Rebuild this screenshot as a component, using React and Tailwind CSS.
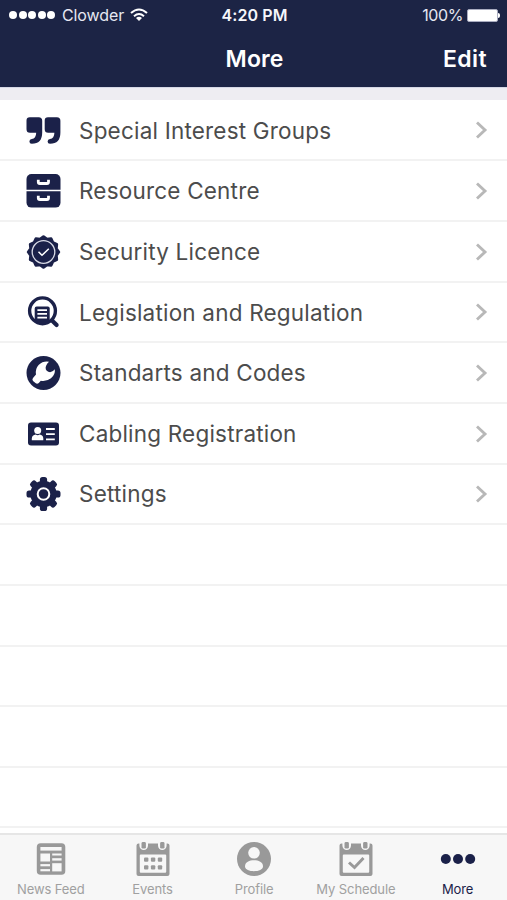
import React from "react";

const NAVY = "#1b2149";
const GREY = "#999999";

function Quotes() {
  const d = "M4.8 5.3H13.7Q17.2 5.3 17.2 8.8V20.5Q17.2 31.8 6.8 31.8Q4.4 31.8 4.4 29.5Q4.4 27.2 6.8 27Q11 26.6 11.2 20.7H5Q1.5 20.7 1.5 17.2V8.6Q1.5 5.3 4.8 5.3Z";
  return (
    <g fill={NAVY}>
      <path d={d} />
      <path d={d} transform="translate(18.2 0)" />
    </g>
  );
}

function Cabinet() {
  const handle = "M13.3 8V10.2Q13.3 11.7 14.8 11.7H22Q23.5 11.7 23.5 10.2V8";
  return (
    <g>
      <rect x="1.5" y="1" width="34" height="33.6" rx="5" fill={NAVY} />
      <path d="M1 17.5H36" stroke="#fff" strokeWidth="1.5" />
      <g fill="none" stroke="#fff" strokeWidth="2.8">
        <path d={handle} transform="translate(0 -1.2)" />
        <path d={handle} transform="translate(0 14.8)" />
      </g>
    </g>
  );
}

function toothPath(cx, cy, outer, inner, count) {
  const pts = [];
  for (let i = 0; i < count * 2; i++) {
    const a = (Math.PI * i) / count - Math.PI / 2;
    const r = i % 2 ? inner : outer;
    pts.push(`${(cx + r * Math.cos(a)).toFixed(2)} ${(cy + r * Math.sin(a)).toFixed(2)}`);
  }
  return `M${pts.join("L")}Z`;
}

function Seal() {
  return (
    <g>
      <path d={toothPath(18.5, 18, 15.2, 13.2, 12)} fill={NAVY} stroke={NAVY} strokeWidth="3" strokeLinejoin="round" />
      <circle cx="18.5" cy="18" r="11.3" fill="none" stroke="#d9dbe6" strokeWidth="1.3" />
      <path d="M13.5 17.8L17 21.3L23.8 14.7" fill="none" stroke="#fff" strokeWidth="1.5" />
    </g>
  );
}

function SearchDocument() {
  return (
    <g>
      <circle cx="17.5" cy="16.8" r="12.9" fill="none" stroke={NAVY} strokeWidth="3.4" />
      <path d="M9.7 14.5Q9.7 12.5 11.7 12.5H22.8Q24.7 12.5 24.7 14.5V29H13.8L9.7 26Z" fill={NAVY} />
      <path d="M12.4 16.2H22M12.4 19.9H22M12.4 23.6H22" stroke="#fff" strokeWidth="1.7" />
      <path d="M27 26.5L31.6 31.1" stroke={NAVY} strokeWidth="4.2" strokeLinecap="round" />
    </g>
  );
}

function WrenchBadge() {
  return (
    <g>
      <circle cx="18.5" cy="18" r="17" fill={NAVY} />
      <path
        d="M24 6.8Q18 5.8 13.6 10Q10 14 11 19.5L8 23Q6.8 24.5 8 26L10.8 28.3Q12.3 29.3 13.8 27.9L15.8 25.8Q21.5 26.8 26 23.3Q30.5 19.3 29.8 14.2Q26.8 18.2 23.3 16.8Q19.6 14.9 21 11Q21.8 8.6 24 6.8Z"
        fill="#fff"
      />
    </g>
  );
}

function IdCard() {
  return (
    <g>
      <rect x="3" y="6.5" width="31" height="23" rx="3" fill={NAVY} />
      <circle cx="12.7" cy="14.5" r="3.5" fill="#fff" />
      <path d="M6.8 24.3V22.5Q7.1 19 10.7 18.6Q12.7 19.8 14.7 18.6Q18.1 19 18.3 22.5V24.3Z" fill="#fff" />
      <path d="M21 13H29.8M21 18.2H29.8M21 23.4H29.8" stroke="#fff" strokeWidth="1.8" />
    </g>
  );
}

function Gear() {
  return (
    <g>
      <g fill={NAVY}>
        <circle cx="18.5" cy="18" r="13.2" />
        {[0, 45, 90, 135].map((a) => (
          <rect key={a} x="14.9" y="1" width="7.2" height="34" rx="2.6" transform={`rotate(${a} 18.5 18)`} />
        ))}
      </g>
      <circle cx="18.5" cy="18" r="5.8" fill="none" stroke="#fff" strokeWidth="2" />
    </g>
  );
}

function Calendar({ children }) {
  return (
    <g>
      <path
        d="M3.6 2.5H32.4Q34.5 2.5 34.5 4.6V33Q34.5 35 32.4 35H3.6Q1.5 35 1.5 33V4.6Q1.5 2.5 3.6 2.5ZM4.8 14.5V30.8Q4.8 31.8 5.8 31.8H30.2Q31.2 31.8 31.2 30.8V14.5Q31.2 13.5 30.2 13.5H5.8Q4.8 13.5 4.8 14.5Z"
        fill={GREY}
        fillRule="evenodd"
      />
      <g stroke="#f7f7f7" strokeWidth="8.6" strokeLinecap="round">
        <path d="M8.7 0V4.6M27.3 0V4.6" />
      </g>
      <g fill={GREY}>
        <rect x="6.5" y="1" width="4.4" height="6.6" rx="1.4" />
        <rect x="25.1" y="1" width="4.4" height="6.6" rx="1.4" />
      </g>
      {children}
    </g>
  );
}

function NewsFeed() {
  return (
    <g>
      <rect x="3.8" y="2.3" width="28.5" height="31.5" rx="3.8" fill={GREY} />
      <g fill="#f7f7f7">
        <rect x="7.4" y="6" width="21.2" height="3.6" />
        <rect x="7.4" y="12.5" width="9.6" height="8" />
        <rect x="19.2" y="12.5" width="9.4" height="2" />
        <rect x="19.2" y="17.2" width="9.4" height="2.4" />
        <rect x="19.2" y="22.2" width="9.4" height="8.2" />
        <rect x="7.4" y="23.1" width="9.6" height="2.2" />
        <rect x="7.4" y="28.1" width="9.6" height="2.2" />
      </g>
    </g>
  );
}

function Events() {
  return (
    <Calendar>
      <g fill={GREY}>
        {[16.4, 24.2].map((y) => [9, 15.9, 22.8].map((x) => <rect key={`${x}-${y}`} x={x} y={y} width="4.4" height="4.4" rx="1.1" />))}
      </g>
    </Calendar>
  );
}

function Profile() {
  return (
    <g>
      <circle cx="18" cy="18" r="17" fill={GREY} />
      <circle cx="18" cy="11.8" r="5.8" fill="#f7f7f7" />
      <path d="M9 25.2C9 17.4 27 17.4 27 25.2C27 31.8 9 31.8 9 25.2Z" fill="#f7f7f7" />
    </g>
  );
}

function Schedule() {
  return (
    <Calendar>
      <path d="M11 21.5L16.5 26.5L25.5 17" fill="none" stroke={GREY} strokeWidth="3" />
    </Calendar>
  );
}

function MoreDots() {
  return (
    <g fill={NAVY}>
      <circle cx="5.8" cy="18" r="5" />
      <circle cx="18" cy="18" r="5" />
      <circle cx="30.2" cy="18" r="5" />
    </g>
  );
}

const rows = [
  { label: "Special Interest Groups", Icon: Quotes },
  { label: "Resource Centre", Icon: Cabinet },
  { label: "Security Licence", Icon: Seal },
  { label: "Legislation and Regulation", Icon: SearchDocument },
  { label: "Standarts and Codes", Icon: WrenchBadge },
  { label: "Cabling Registration", Icon: IdCard },
  { label: "Settings", Icon: Gear },
];

const tabs = [
  { label: "News Feed", Icon: NewsFeed },
  { label: "Events", Icon: Events },
  { label: "Profile", Icon: Profile },
  { label: "My Schedule", Icon: Schedule },
  { label: "More", Icon: MoreDots, active: true },
];

function StatusBar() {
  return (
    <div className="grid h-[30px] grid-cols-3 items-center pl-[9px] pr-[7px] text-[16px] text-[#e6e8f2]">
      <div className="flex items-center">
        <div className="flex gap-[1.5px]">
          {[0, 1, 2, 3, 4].map((i) => (
            <span key={i} className="size-[8px] rounded-full bg-white" />
          ))}
        </div>
        <span className="ml-[7px] tracking-[-0.1px]">Clowder</span>
        <svg className="ml-[6px] h-[14px] w-[18px]" viewBox="0 0 18 14" fill="none" stroke="#fff" strokeWidth="2">
          <path d="M1 5.1Q9 -2.2 17 5.1M4 8.2Q9 3.8 14 8.2" />
          <path d="M9 12.9L6 9.9Q9 7.5 12 9.9Z" fill="#fff" stroke="none" />
        </svg>
      </div>
      <div className="text-center font-semibold tracking-[0.1px] text-[#f6f7fb]">4:20 PM</div>
      <div className="flex items-center justify-end">
        <span className="tracking-[-0.4px]">100%</span>
        <span className="ml-[4px] h-[13px] w-[31px] rounded-[2px] border border-[#a9acc0] bg-white" />
        <span className="h-[5px] w-[2px] rounded-r-full bg-white" />
      </div>
    </div>
  );
}

export default function App() {
  return (
    <div className="flex h-[900px] w-[507px] flex-col overflow-hidden bg-white font-['Inter','Liberation_Sans',sans-serif]">
      <header className="h-[87px] shrink-0 bg-[#1c2445]">
        <StatusBar />
        <div className="grid h-[59px] grid-cols-3 items-center px-5 text-[23px] font-semibold text-white">
          <span />
          <h1 className="pl-[2px] text-center tracking-[0.1px]">More</h1>
          <button className="text-right tracking-[0.4px]">Edit</button>
        </div>
      </header>
      <div className="h-[13px] shrink-0 border-t border-[#d5d7e5] bg-[#eeedf2]" />
      <main className="min-h-0 flex-1 overflow-hidden pt-[0.6px]">
        {rows.map(({ label, Icon }) => (
          <div key={label} className="flex h-[60.66px] items-center border-b-2 border-[#f2f2f2] pl-[25px] pr-[19px]">
            <svg className="mt-[1px] size-[36px] shrink-0" viewBox="0 0 36 36">
              <Icon />
            </svg>
            <span className="ml-[18px] flex-1 pt-px text-[22.5px] tracking-[0.2px] text-[#4c4c4c]">{label}</span>
            <svg className="mt-px h-[18px] w-[13px]" viewBox="0 0 13 18" fill="none" stroke="#b8b8b8" strokeWidth="2.9">
              <path d="M2 1.5L10 9L2 16.5" />
            </svg>
          </div>
        ))}
        {[0, 1, 2, 3, 4].map((i) => (
          <div key={i} className="h-[60.66px] border-b-2 border-[#f2f2f2]" />
        ))}
      </main>
      <nav className="grid h-[67px] shrink-0 grid-cols-[repeat(5,101.7px)] border-t-2 border-[#e6e6e6] bg-[#f7f7f7]">
        {tabs.map(({ label, Icon, active }) => (
          <div key={label} className={active ? "flex flex-col items-center pt-[6px] text-[#1b2149]" : "flex flex-col items-center pt-[6px] text-[#a0a0a0]"}>
            <svg className="size-[36px]" viewBox="0 0 36 36">
              <Icon />
            </svg>
            <span className="mt-[3px] whitespace-nowrap text-[13px] leading-[18px] tracking-[-0.1px]">{label}</span>
          </div>
        ))}
      </nav>
    </div>
  );
}
